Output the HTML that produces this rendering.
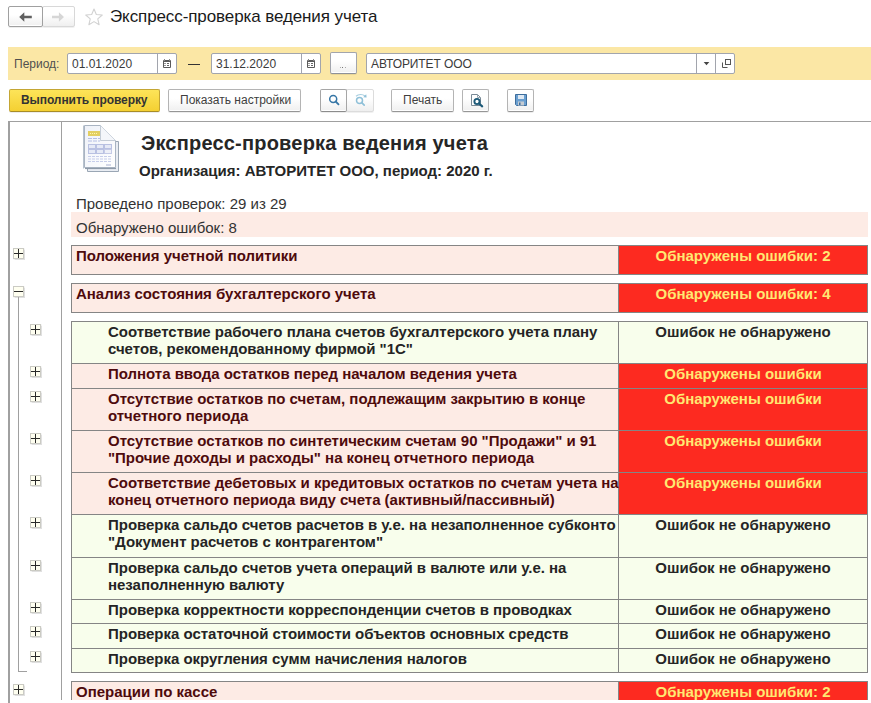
<!DOCTYPE html>
<html><head><meta charset="utf-8">
<style>
*{box-sizing:border-box;margin:0;padding:0}
html,body{width:871px;height:703px;overflow:hidden;background:#fff}
body{position:relative;font-family:"Liberation Sans",sans-serif;color:#333}
.a{position:absolute}
.t{position:absolute;white-space:nowrap;line-height:1}
.btn{position:absolute;border:1px solid #b4b4b4;border-bottom-color:#969696;border-radius:2px;background:linear-gradient(#fff 0%,#fff 40%,#efefef 100%);box-shadow:0 1px 0 rgba(0,0,0,.07),inset 0 -1px 0 #fff}
.inp{position:absolute;background:#fff;border:1px solid #a2a5ad;border-radius:2px}
.sep{position:absolute;top:0;bottom:0;width:1px;background:#a2a5ad}
.pl{position:absolute;width:11px;height:11px;border:1px solid #cbcbc4;background:#fffff0;box-shadow:0 0 1px .5px rgba(0,0,0,.12)}
.pl:before{content:"";position:absolute;left:0;top:4px;width:9px;height:1px;background:#2a2a2a}
.pl:after{content:"";position:absolute;left:4px;top:0;width:1px;height:9px;background:#2a2a2a}
.mn:after{display:none}

.row{position:absolute;left:71px;width:797px;border:1px solid #858585}
.rg{background:#f8feec}
.rp{background:#fdebe5}
.lc{position:absolute;left:0;top:0;bottom:0;width:547px;border-right:1px solid #858585}
.rc{position:absolute;left:547px;right:0;top:0;bottom:0}
.lc .tx{letter-spacing:-0.02px}
.rp .rc{background:#fd2a20}
.tx{position:absolute;top:1px;left:4px;white-space:nowrap;font-size:15px;font-weight:bold;line-height:17px}
.rg .tx{color:#242424}
.rp .tx{color:#4e0a0c}
.rc .tx{left:0;right:0;text-align:center}
.rp .rc .tx{color:#ffe872}
.rg .rc .tx{color:#262626}
</style></head><body>

<!-- nav -->
<div class="btn" style="left:8px;top:6px;width:35px;height:21px;border-color:#a0a0a0;z-index:2"></div>
<div class="btn" style="left:42px;top:6px;width:33px;height:21px;border-color:#d8d8d8;box-shadow:0 1px 0 rgba(0,0,0,.06)"></div>
<svg class="a" style="left:19px;top:12px;z-index:3" width="14" height="11" viewBox="0 0 14 11"><path d="M0.2 5L5.3 0.3V3.8H12.8V6.3H5.3V9.7Z" fill="#606060"/></svg>
<svg class="a" style="left:52px;top:12px;z-index:3" width="14" height="11" viewBox="0 0 14 11"><path d="M12 5L6.9 0.3V3.8H0V6.3H6.9V9.7Z" fill="#d6d6d6"/></svg>
<svg class="a" style="left:84px;top:8px" width="20" height="20" viewBox="0 0 20 20"><path d="M10.00 1.00 L12.32 6.50 L18.27 7.01 L13.76 10.92 L15.11 16.74 L10.00 13.65 L4.89 16.74 L6.24 10.92 L1.73 7.01 L7.68 6.50Z" fill="none" stroke="#d2d2d2" stroke-width="1.1" stroke-linejoin="round"/></svg>
<div class="t" style="left:110px;top:8px;font-size:17px;color:#1a1a1a;letter-spacing:-0.1px">Экспресс-проверка ведения учета</div>

<!-- period bar -->
<div class="a" style="left:8px;top:47px;width:863px;height:33px;background:#fbe7a5"></div>
<div class="t" style="left:14px;top:58px;font-size:12px;color:#505050">Период:</div>
<div class="inp" style="left:67px;top:53px;width:110px;height:21px"><div class="sep" style="left:89px"></div></div>
<svg class="a" style="left:162px;top:58px" width="10" height="10" viewBox="0 0 10 10"><rect x="1" y="2" width="8" height="8" rx="1" fill="#5a5a5a"/><rect x="2" y="4" width="6" height="5" fill="#fff"/><rect x="2" y="5" width="2" height="1" fill="#999"/><rect x="5" y="5" width="2" height="1" fill="#666"/><rect x="2" y="7" width="2" height="1" fill="#999"/><rect x="5" y="7" width="2" height="1" fill="#666"/><rect x="2" y="1" width="1" height="2" fill="#888"/><rect x="7" y="1" width="1" height="2" fill="#888"/></svg>
<div class="t" style="left:72px;top:58px;font-size:12px;color:#3a3a3a">01.01.2020</div>
<div class="inp" style="left:211px;top:53px;width:110px;height:21px"><div class="sep" style="left:89px"></div></div>
<svg class="a" style="left:306px;top:58px" width="10" height="10" viewBox="0 0 10 10"><rect x="1" y="2" width="8" height="8" rx="1" fill="#5a5a5a"/><rect x="2" y="4" width="6" height="5" fill="#fff"/><rect x="2" y="5" width="2" height="1" fill="#999"/><rect x="5" y="5" width="2" height="1" fill="#666"/><rect x="2" y="7" width="2" height="1" fill="#999"/><rect x="5" y="7" width="2" height="1" fill="#666"/><rect x="2" y="1" width="1" height="2" fill="#888"/><rect x="7" y="1" width="1" height="2" fill="#888"/></svg>
<div class="t" style="left:216px;top:58px;font-size:12px;color:#3a3a3a">31.12.2020</div>
<div class="a" style="left:188px;top:64px;width:12px;height:1px;background:#333"></div>
<div class="btn" style="left:330px;top:52px;width:27px;height:22px;border-color:#a2a5ad;border-bottom-color:#8e9199"></div>
<div class="a" style="left:340px;top:67px;width:1px;height:1px;background:#aaa"></div>
<div class="a" style="left:342px;top:67px;width:1px;height:1px;background:#777"></div>
<div class="a" style="left:345px;top:67px;width:1px;height:1px;background:#aaa"></div>
<div class="inp" style="left:366px;top:53px;width:369px;height:21px"><div class="sep" style="left:329px"></div><div class="sep" style="left:348px"></div></div>
<div class="t" style="left:371px;top:58px;font-size:12px;color:#3a3a3a;letter-spacing:-0.1px">АВТОРИТЕТ ООО</div>
<svg class="a" style="left:703px;top:62px" width="7" height="4" viewBox="0 0 7 4"><path d="M0.7 0H6.3L3.5 3.2Z" fill="#444"/></svg>
<svg class="a" style="left:721px;top:59px" width="11" height="10" viewBox="0 0 11 10"><path d="M1.5 3.5V8.5H6.5" fill="none" stroke="#555" stroke-width="1"/><rect x="4.5" y="0.5" width="5" height="5" fill="none" stroke="#555" stroke-width="1"/></svg>

<!-- toolbar -->
<div class="btn" style="left:9px;top:89px;width:151px;height:23px;background:linear-gradient(#fde459,#f4d032);border-color:#c4a634;border-bottom-color:#a88c26;box-shadow:0 1px 0 rgba(0,0,0,.07)"></div>
<div class="t" style="left:21px;top:94px;font-size:12px;font-weight:bold;color:#333;letter-spacing:-0.08px">Выполнить проверку</div>
<div class="btn" style="left:168px;top:89px;width:133px;height:23px"></div>
<div class="t" style="left:180px;top:94px;font-size:12px;color:#404040">Показать настройки</div>
<div class="btn" style="left:320px;top:89px;width:27px;height:23px;z-index:2;border-color:#a6a6a6;border-bottom-color:#8c8c8c"></div>
<div class="btn" style="left:346px;top:89px;width:28px;height:23px;border-color:#dcdcdc;box-shadow:0 1px 0 rgba(0,0,0,.06)"></div>
<svg class="a" style="left:327px;top:93px;z-index:3" width="14" height="14" viewBox="0 0 14 14"><circle cx="6.2" cy="6" r="3.5" fill="none" stroke="#3676a6" stroke-width="1.5"/><path d="M8.7 8.5L11.5 11.3" stroke="#3676a6" stroke-width="1.8" stroke-linecap="round"/></svg>
<svg class="a" style="left:353px;top:92px;z-index:3" width="16" height="16" viewBox="0 0 16 16"><circle cx="6.5" cy="8.5" r="3" fill="none" stroke="#8fc0d8" stroke-width="1.5"/><path d="M8.7 10.7L11.2 13.2" stroke="#8fc0d8" stroke-width="1.7" stroke-linecap="round"/><path d="M3 4.2C5.5 2 9.5 2 12 4" fill="none" stroke="#a9cfe0" stroke-width="1.2"/><path d="M10.2 5.2L13.6 5.6L13.2 2.2Z" fill="#8fc0d8"/></svg>
<div class="btn" style="left:391px;top:89px;width:63px;height:23px"></div>
<div class="t" style="left:403px;top:94px;font-size:12px;color:#404040">Печать</div>
<div class="btn" style="left:462px;top:89px;width:27px;height:23px"></div>
<svg class="a" style="left:470px;top:93px" width="14" height="15" viewBox="0 0 14 15"><path d="M1.5 1.5H7.5L10.5 4.5V12.5H1.5Z" fill="#fff" stroke="#7a8a96" stroke-width="1"/><path d="M7.5 1.5V4.5H10.5" fill="none" stroke="#9aa8b2" stroke-width="1"/><circle cx="7" cy="8.5" r="2.6" fill="none" stroke="#1d5a78" stroke-width="1.9"/><path d="M9 10.5L12.2 13.4" stroke="#1d5a78" stroke-width="2.1" stroke-linecap="round"/></svg>
<div class="btn" style="left:507px;top:89px;width:27px;height:23px"></div>
<svg class="a" style="left:514px;top:93px" width="14" height="14" viewBox="0 0 14 14"><path d="M1.5 1.5H12.5V12.5H2.5L1.5 11.5Z" fill="#6a9fd0" stroke="#3d6d9c" stroke-width="1"/><rect x="4" y="2" width="6" height="4" fill="#dfe9f3"/><rect x="4" y="8.5" width="6" height="4" fill="#c5cbd1"/><rect x="5" y="9.5" width="1.5" height="2.5" fill="#3d6d9c"/></svg>

<!-- frame -->
<div class="a" style="left:8px;top:121px;width:863px;height:582px;border-left:2px solid #a0a0a0;border-top:1px solid #a0a0a0"></div>
<div class="a" style="left:61px;top:121px;width:1px;height:582px;background:#a0a0a0"></div>


<!-- report header -->
<svg class="a" style="left:80px;top:122px" width="44" height="54" viewBox="0 0 44 54">
<defs><linearGradient id="pg" x1="0" y1="0" x2="1" y2="1"><stop offset="0" stop-color="#eef1f8"/><stop offset="1" stop-color="#ffffff"/></linearGradient></defs>
<path d="M7.5 49.5V19.5H38.5V49.5Z" fill="#e9edf3" stroke="#9aa6b4" stroke-width="1"/>
<path d="M4.5 45.5V3.5H20.5L35.5 18.5V45.5Z" fill="url(#pg)" stroke="#a9b4c2" stroke-width="1"/>
<path d="M20.5 3.5V18.5H35.5" fill="#f4f6fa" stroke="#c4ccd6" stroke-width="1"/>
<path d="M3.5 3.5V46.5" stroke="#b8c2ce" stroke-width="1"/>
<path d="M5 46.5H36" stroke="#8e9aa8" stroke-width="1.2"/>
<rect x="8" y="9" width="12" height="5" fill="#e3cf62"/>
<path d="M10 11.5H18" stroke="#fff6b0" stroke-width="1" stroke-dasharray="1 1"/>
<path d="M8 16.5H20M8 19H20" stroke="#b4bee4" stroke-width="1" stroke-dasharray="4 1"/>
<rect x="8.5" y="22.5" width="7" height="4" fill="#e6eaf6" stroke="#b9c1e2" stroke-width="1"/>
<rect x="16.5" y="22.5" width="7" height="4" fill="#e6eaf6" stroke="#b9c1e2" stroke-width="1"/>
<rect x="24.5" y="22.5" width="7" height="4" fill="#e6eaf6" stroke="#b9c1e2" stroke-width="1"/>
<rect x="8.5" y="27.5" width="7" height="4" fill="#e6eaf6" stroke="#b9c1e2" stroke-width="1"/>
<rect x="16.5" y="27.5" width="7" height="4" fill="#e6eaf6" stroke="#b9c1e2" stroke-width="1"/>
<rect x="24.5" y="27.5" width="7" height="4" fill="#eef0f8" stroke="#c4cae6" stroke-width="1"/>
<path d="M8 34.5H31M8 37H31M8 39.5H31" stroke="#c6cdea" stroke-width="1" stroke-dasharray="3 1"/>
<path d="M26 43H31" stroke="#a8b0d0" stroke-width="1"/>
</svg>
<div class="t" style="left:141px;top:133px;font-size:20px;font-weight:bold;color:#262626;letter-spacing:0.2px">Экспресс-проверка ведения учета</div>
<div class="t" style="left:139px;top:163px;font-size:15px;font-weight:bold;color:#262626">Организация: АВТОРИТЕТ ООО, период: 2020 г.</div>
<div class="t" style="left:76px;top:195px;font-size:15px;color:#333;line-height:17px">Проведено проверок: 29 из 29</div>
<div class="a" style="left:71px;top:212px;width:797px;height:25px;background:#fdebe5"></div>
<div class="t" style="left:76px;top:219px;font-size:15px;color:#333;line-height:17px">Обнаружено ошибок: 8</div>

<!-- groups -->
<div class="row rp" style="top:245px;height:30px"><div class="lc"><div class="tx">Положения учетной политики</div></div><div class="rc"><div class="tx">Обнаружены ошибки: 2</div></div></div>
<div class="pl" style="left:13px;top:248px"></div>
<div class="row rp" style="top:283px;height:30px"><div class="lc"><div class="tx">Анализ состояния бухгалтерского учета</div></div><div class="rc"><div class="tx">Обнаружены ошибки: 4</div></div></div>
<div class="pl mn" style="left:13px;top:286px"></div>
<div class="a" style="left:18px;top:297px;width:1px;height:374px;background:#a0a0a0"></div>
<div class="a" style="left:18px;top:671px;width:9px;height:1px;background:#a0a0a0"></div>
<!-- sub table -->
<div class="a" style="left:71px;top:321px;width:797px;height:352px;border:1px solid #8a8a8a"></div>
<div class="row rg" style="top:321px;height:43px"><div class="lc"><div class="tx" style="left:36px">Соответствие рабочего плана счетов бухгалтерского учета плану<br>счетов, рекомендованному фирмой &quot;1С&quot;</div></div><div class="rc"><div class="tx ok">Ошибок не обнаружено</div></div></div>
<div class="pl" style="left:30px;top:324px"></div>
<div class="row rp" style="top:363px;height:26px"><div class="lc"><div class="tx" style="left:36px">Полнота ввода остатков перед началом ведения учета</div></div><div class="rc"><div class="tx er">Обнаружены ошибки</div></div></div>
<div class="pl" style="left:30px;top:366px"></div>
<div class="row rp" style="top:388px;height:43px"><div class="lc"><div class="tx" style="left:36px">Отсутствие остатков по счетам, подлежащим закрытию в конце<br>отчетного периода</div></div><div class="rc"><div class="tx er">Обнаружены ошибки</div></div></div>
<div class="pl" style="left:30px;top:391px"></div>
<div class="row rp" style="top:430px;height:43px"><div class="lc"><div class="tx" style="left:36px">Отсутствие остатков по синтетическим счетам 90 &quot;Продажи&quot; и 91<br>&quot;Прочие доходы и расходы&quot; на конец отчетного периода</div></div><div class="rc"><div class="tx er">Обнаружены ошибки</div></div></div>
<div class="pl" style="left:30px;top:433px"></div>
<div class="row rp" style="top:472px;height:43px"><div class="lc"><div class="tx" style="left:36px">Соответствие дебетовых и кредитовых остатков по счетам учета на<br>конец отчетного периода виду счета (активный/пассивный)</div></div><div class="rc"><div class="tx er">Обнаружены ошибки</div></div></div>
<div class="pl" style="left:30px;top:475px"></div>
<div class="row rg" style="top:514px;height:44px"><div class="lc"><div class="tx" style="left:36px">Проверка сальдо счетов расчетов в у.е. на незаполненное субконто<br>&quot;Документ расчетов с контрагентом&quot;</div></div><div class="rc"><div class="tx ok">Ошибок не обнаружено</div></div></div>
<div class="pl" style="left:30px;top:517px"></div>
<div class="row rg" style="top:557px;height:43px"><div class="lc"><div class="tx" style="left:36px">Проверка сальдо счетов учета операций в валюте или у.е. на<br>незаполненную валюту</div></div><div class="rc"><div class="tx ok">Ошибок не обнаружено</div></div></div>
<div class="pl" style="left:30px;top:560px"></div>
<div class="row rg" style="top:599px;height:25px"><div class="lc"><div class="tx" style="left:36px">Проверка корректности корреспонденции счетов в проводках</div></div><div class="rc"><div class="tx ok">Ошибок не обнаружено</div></div></div>
<div class="pl" style="left:30px;top:602px"></div>
<div class="row rg" style="top:623px;height:26px"><div class="lc"><div class="tx" style="left:36px">Проверка остаточной стоимости объектов основных средств</div></div><div class="rc"><div class="tx ok">Ошибок не обнаружено</div></div></div>
<div class="pl" style="left:30px;top:626px"></div>
<div class="row rg" style="top:648px;height:25px"><div class="lc"><div class="tx" style="left:36px">Проверка округления сумм начисления налогов</div></div><div class="rc"><div class="tx ok">Ошибок не обнаружено</div></div></div>
<div class="pl" style="left:30px;top:651px"></div>
<div class="row rp" style="top:681px;height:30px"><div class="lc"><div class="tx">Операции по кассе</div></div><div class="rc"><div class="tx">Обнаружены ошибки: 2</div></div></div>
<div class="pl" style="left:13px;top:684px"></div>
<div class="a" style="left:10px;top:700px;width:861px;height:3px;background:#fff;z-index:50"></div>
</body></html>
